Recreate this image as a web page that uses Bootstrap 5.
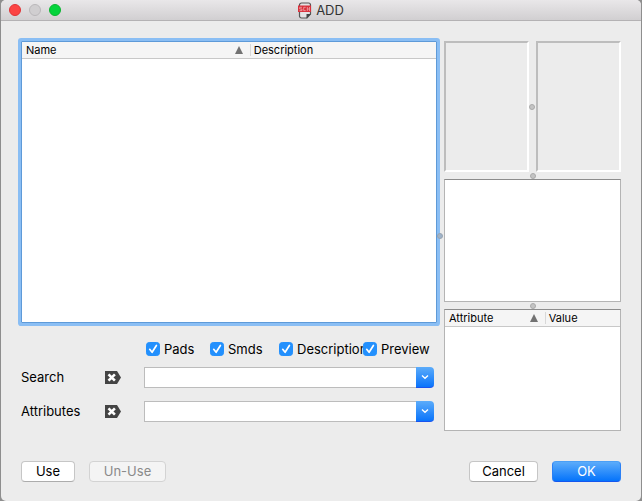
<!DOCTYPE html>
<html lang="en">
<head>
<meta charset="utf-8">
<meta name="viewport" content="width=device-width, initial-scale=1">
<title>ADD</title>
<link href="https://cdn.jsdelivr.net/npm/bootstrap@5.3.0/dist/css/bootstrap.min.css" rel="stylesheet">
<style>
  body { font-family: Inter, Roboto, sans-serif; font-size: 13px; line-height: 16px; color: #000; background: #8e8e8e; }
  .window { background: #ececec; margin: 0 1px; border-radius: 5px; overflow: hidden; }
  .titlebar { height: 21px; background: linear-gradient(#e9e7e9, #d1cfd1); border-bottom: 1px solid #b4b2b4; color: #333; }
  .lights { left: 8px; top: 4px; gap: 8px; }
  .light { width: 12px; height: 12px; border-radius: 50%; padding: 0; border: 1px solid; }
  .light-close { background: #fc4444; border-color: #df3336; }
  .light-min { background: #d0ced0; border-color: #b9b7b9; }
  .light-zoom { background: #04d43c; border-color: #0bb431; }
  .content { padding: 20px 20px 19px; }
  .pane-left { flex: 416 1 0; min-width: 0; }
  .pane-right { flex: 177 1 0; min-width: 0; }
  .split { flex: 0 0 7px; position: relative; z-index: 2; }
  .split span { width: 6px; height: 6px; border-radius: 50%; background: #c4c4c4; border: 1px solid #aaa; }
  .split-list span { background: #9fb3c9; border-color: #98a4b1; }
  .preview { flex: 1 1 0; border: 2px solid; border-color: #bdbdbd #fff #fff #bdbdbd; }
  .row-previews { flex: 131 1 0; }
  .row-info { flex: 121 1 0; }
  .row-attrs { flex: 120 1 0; }
  .sheet { background: #fff; border: 1px solid #b4b4b4; border-top-color: #8c8c8c; }
  .sheet-focus { border-color: #5e9ad8; box-shadow: 0 0 0 3px #8abef4; border-radius: 1px; flex: 1 1 0; }
  .heads { table-layout: fixed; font-size: 11px; line-height: 15px; background: #f5f5f5; border-bottom: 1px solid #c8c8c8; }
  .heads th { font-weight: 400; padding: 1px 4px 0; position: relative; }
  .heads th + th::before { content: ""; position: absolute; left: 0; top: 2px; bottom: 2px; width: 1px; background: #d8d8d8; }
  .heads svg { width: 8px; height: 8px; margin: 0 3px 2px 0; }
  .col-name { width: 55%; }
  .col-attr { width: 57%; }
  .options { padding-left: 125px; margin-top: 18px; height: 16px; }
  .option { gap: 4px; white-space: nowrap; }
  .option-a { flex: 0 0 64px; }
  .option-b { flex: 0 0 69px; }
  .option-c { flex: 0 0 84px; min-width: 0; }
  .option-c label { flex: 1 1 0; min-width: 0; }
  .tick { width: 14px; height: 14px; margin: 0; flex: none; border-radius: 3px; position: relative; z-index: 1; }
  .tick:checked { background-color: #2390fd; border-color: #2390fd; background-size: 14px; }
  .tick:checked[type=checkbox] { background-image: url("data:image/svg+xml,%3csvg xmlns='http://www.w3.org/2000/svg' viewBox='0 0 14 14'%3e%3cpath d='M3.700 7.300l2.400 3L10.400 3.500' fill='none' stroke='%23fff' stroke-width='1.700' stroke-linecap='round' stroke-linejoin='round'/%3e%3c/svg%3e"); }
  .field-label { flex: 0 0 84px; padding-bottom: 1px; }
  .clear { flex: 0 0 39px; border: 0; background: none; padding: 0 0 1px; text-align: left; line-height: 0; }
  .clear svg { width: 16px; height: 13px; }
  .combo { height: 21px; margin-right: 3px; }
  .combo input { border: 1px solid #bcbcbc; border-right: 0; background: #fff; padding: 0 4px; min-width: 0; outline: 0; }
  .combo button { flex: 0 0 18px; border: 0; padding: 0; line-height: 0; border-radius: 0 4px 4px 0; background: linear-gradient(#5cacfa, #0a74fb); border-bottom: 1px solid #1a54ee; }
  .fields { margin-top: 10px; gap: 13px; padding-bottom: 9px; }
  .actions { margin-top: 30px; gap: 14px; }
  .mac { height: 21px; padding: 0 0 1px; font-size: 13px; line-height: 17px; border: 1px solid #c6c6c6; border-bottom-color: #acacac; border-radius: 4px; background: #fff; color: #000; }
  .mac:disabled { background: #f4f4f4; color: #8a8a8a; border-color: #d3d3d3; opacity: 1; }
  .mac-ok { background: linear-gradient(#5cacfa, #0473fb); border-color: #4a9ff6 #2a80f5 #1557ee; color: #fff; }
  .w-use { width: 54px; }
  .w-unuse { width: 77px; }
  .w-end { width: 69px; }
</style>
<script src="https://cdn.jsdelivr.net/npm/bootstrap@5.3.0/dist/js/bootstrap.bundle.min.js"></script>
</head>
<body>
<div class="window min-vh-100 d-flex flex-column">
  <header class="titlebar position-relative d-flex align-items-center justify-content-center">
    <div class="lights position-absolute d-flex">
      <button class="light light-close" type="button" aria-label="Close"></button>
      <button class="light light-min" type="button" aria-label="Minimize" disabled></button>
      <button class="light light-zoom" type="button" aria-label="Zoom"></button>
    </div>
    <svg class="me-1" width="14" height="17" viewBox="0 0 14 17" aria-hidden="true">
      <path d="M3.500 1h7a2 2 0 0 1 2 2v9l-3.500 4h-5.500a2 2 0 0 1-2-2V3a2 2 0 0 1 2-2z" fill="#e4e2e4" stroke="#555" stroke-width="1.200"/>
      <path d="M8.500 16.500v-4.500h4.500z" fill="#444"/>
      <path d="M0 3.500h13v6.500H0z" fill="#d9303b"/>
      <path d="M4 5.300H1.700V7H4v1.600H1.500M7.700 5.300H5.700v3.300h2M9.300 5v4M11.500 5v4M9.300 7h2.200" fill="none" stroke="#f3b5b9" stroke-width=".7"/>
    </svg>
    <span>ADD</span>
  </header>

  <div class="content flex-grow-1 d-flex flex-column">
    <main class="flex-grow-1 d-flex">
      <section class="pane-left d-flex flex-column">
        <div class="sheet sheet-focus">
          <table class="heads w-100">
            <thead><tr>
              <th class="col-name" scope="col"><div class="d-flex justify-content-between align-items-center">Name
                <svg viewBox="0 0 8 8" aria-hidden="true"><path d="M4 0l4 8H0z" fill="#727272"/></svg></div></th>
              <th scope="col">Description</th>
            </tr></thead>
          </table>
        </div>
        <div class="options d-flex">
          <div class="option option-a d-flex align-items-center"><input class="form-check-input tick" type="checkbox" id="pads" checked><label for="pads">Pads</label></div>
          <div class="option option-b d-flex align-items-center"><input class="form-check-input tick" type="checkbox" id="smds" checked><label for="smds">Smds</label></div>
          <div class="option option-c d-flex align-items-center"><input class="form-check-input tick" type="checkbox" id="desc" checked><label for="desc">Description</label></div>
          <div class="option d-flex align-items-center"><input class="form-check-input tick" type="checkbox" id="prev" checked><label for="prev">Preview</label></div>
        </div>
        <div class="fields d-flex flex-column">
          <div class="d-flex align-items-center">
            <label class="field-label" for="search">Search</label>
            <button class="clear" type="button" aria-label="Clear search"><svg viewBox="0 0 16 13" aria-hidden="true"><path d="M0 0h12l4 6.500-4 6.500H0z" fill="#444"/><path d="M3.500 3.300l6.400 6.400M9.900 3.300l-6.400 6.400" stroke="#fff" stroke-width="2.600"/></svg></button>
            <div class="combo flex-grow-1 d-flex"><input class="flex-grow-1" type="text" id="search"><button type="button" aria-label="Search history"><svg width="8" height="6" viewBox="0 0 8 6" aria-hidden="true"><path d="M1 1.500l3 2.700 3-2.700" fill="none" stroke="#fff" stroke-width="1.400"/></svg></button></div>
          </div>
          <div class="d-flex align-items-center">
            <label class="field-label" for="attributes">Attributes</label>
            <button class="clear" type="button" aria-label="Clear attributes"><svg viewBox="0 0 16 13" aria-hidden="true"><path d="M0 0h12l4 6.500-4 6.500H0z" fill="#444"/><path d="M3.500 3.300l6.400 6.400M9.900 3.300l-6.400 6.400" stroke="#fff" stroke-width="2.600"/></svg></button>
            <div class="combo flex-grow-1 d-flex"><input class="flex-grow-1" type="text" id="attributes"><button type="button" aria-label="Attribute history"><svg width="8" height="6" viewBox="0 0 8 6" aria-hidden="true"><path d="M1 1.500l3 2.700 3-2.700" fill="none" stroke="#fff" stroke-width="1.400"/></svg></button></div>
          </div>
        </div>
      </section>

      <div class="split split-list d-flex align-items-center justify-content-start"><span></span></div>

      <section class="pane-right d-flex flex-column">
        <div class="row-previews d-flex">
          <div class="preview"></div>
          <div class="split d-flex align-items-center justify-content-start"><span></span></div>
          <div class="preview"></div>
        </div>
        <div class="split d-flex align-items-center justify-content-center"><span></span></div>
        <div class="sheet row-info"></div>
        <div class="split d-flex align-items-center justify-content-center"><span></span></div>
        <div class="sheet row-attrs">
          <table class="heads w-100">
            <thead><tr>
              <th class="col-attr" scope="col"><div class="d-flex justify-content-between align-items-center">Attribute
                <svg viewBox="0 0 8 8" aria-hidden="true"><path d="M4 0l4 8H0z" fill="#727272"/></svg></div></th>
              <th scope="col">Value</th>
            </tr></thead>
          </table>
        </div>
      </section>
    </main>

    <footer class="actions d-flex">
      <button class="btn mac w-use" type="button">Use</button>
      <button class="btn mac w-unuse" type="button" disabled>Un-Use</button>
      <button class="btn mac w-end ms-auto" type="button">Cancel</button>
      <button class="btn mac mac-ok w-end" type="button">OK</button>
    </footer>
  </div>
</div>
</body>
</html>
